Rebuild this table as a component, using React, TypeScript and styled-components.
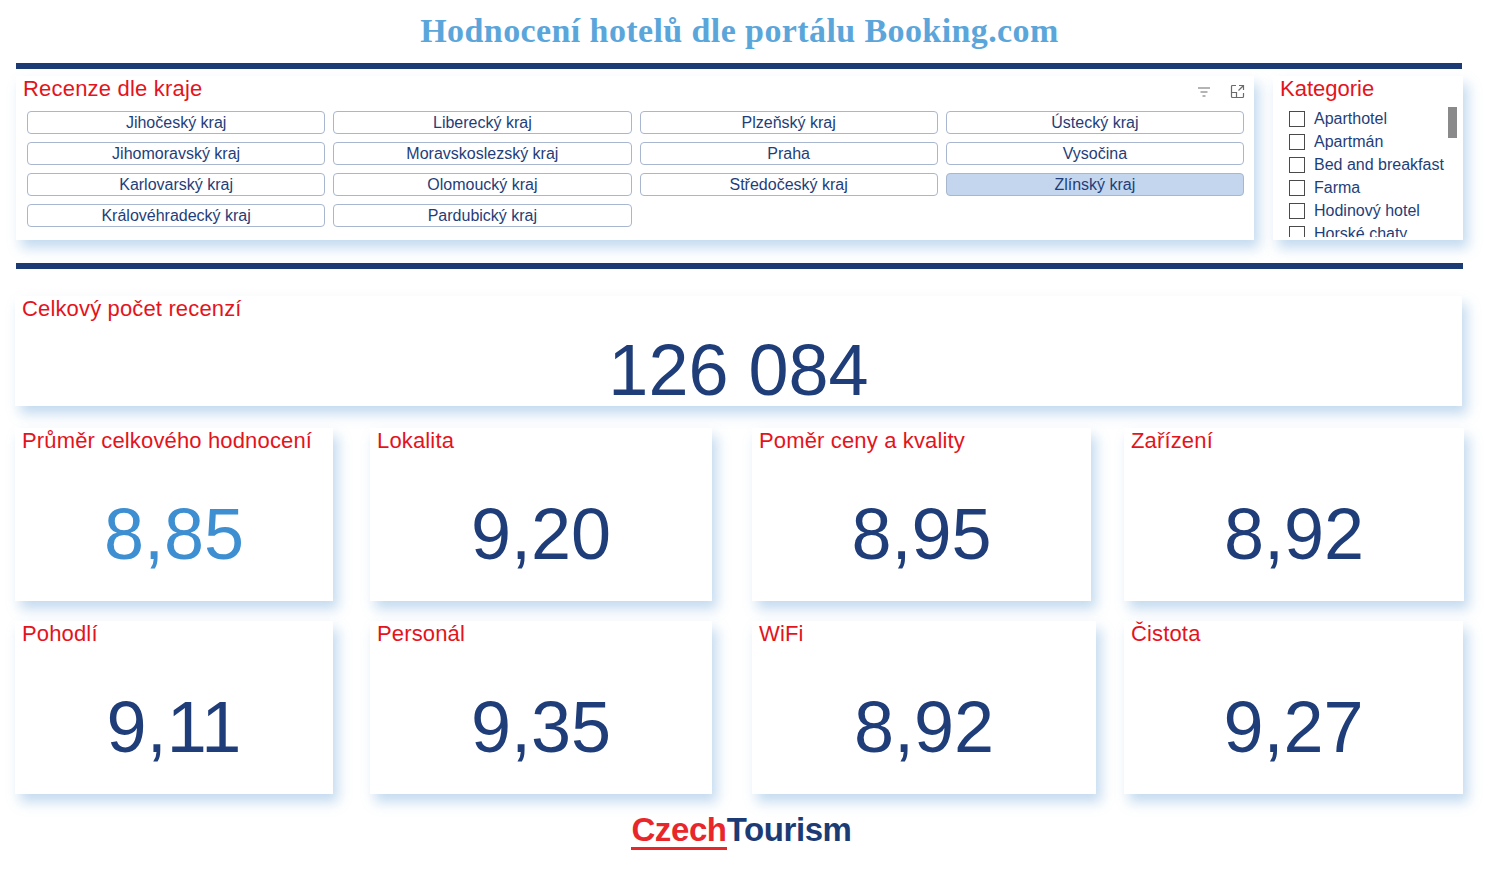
import styled, { createGlobalStyle } from 'styled-components'

const Color = {
	Navy: '#1c3b74',
	Number: '#1f3e79',
	NumberLight: '#3d8fd1',
	Red: '#e3141c',
	TitleBlue: '#5aa6db',
	ButtonBorder: '#a9b6cf',
	Selected: '#c3d6ee',
	Shadow: 'rgba(96, 158, 214, 0.38)'
}

const regions = [
	'Jihočeský kraj',
	'Liberecký kraj',
	'Plzeňský kraj',
	'Ústecký kraj',
	'Jihomoravský kraj',
	'Moravskoslezský kraj',
	'Praha',
	'Vysočina',
	'Karlovarský kraj',
	'Olomoucký kraj',
	'Středočeský kraj',
	'Zlínský kraj',
	'Královéhradecký kraj',
	'Pardubický kraj'
]

const categories = [
	'Aparthotel',
	'Apartmán',
	'Bed and breakfast',
	'Farma',
	'Hodinový hotel',
	'Horské chaty'
]

const scores = [
	{ label: 'Průměr celkového hodnocení', value: '8,85', width: 318, light: true },
	{ label: 'Lokalita', value: '9,20', width: 342 },
	{ label: 'Poměr ceny a kvality', value: '8,95', width: 339 },
	{ label: 'Zařízení', value: '8,92', width: 340 },
	{ label: 'Pohodlí', value: '9,11', width: 318 },
	{ label: 'Personál', value: '9,35', width: 342 },
	{ label: 'WiFi', value: '8,92', width: 344 },
	{ label: 'Čistota', value: '9,27', width: 339 }
]

const FilterIcon = () => (
	<svg width='14' height='12' viewBox='0 0 14 12' fill='none' stroke='#6b6b6b' strokeWidth='1.2'>
		<path d='M1 2h12M3.5 6h7M5.5 10h3' />
	</svg>
)

const FocusIcon = () => (
	<svg width='15' height='15' viewBox='0 0 15 15' fill='none' stroke='#6b6b6b' strokeWidth='1.2'>
		<path d='M6 1.5H2.5a1 1 0 0 0-1 1V12.5a1 1 0 0 0 1 1h10a1 1 0 0 0 1-1V9' />
		<path d='M1.5 8.5h5v5' />
		<path d='M9 1.5h4.5V6M13.5 1.5L8.5 6.5' />
	</svg>
)

export default function App() {
	return (
		<>
			<GlobalStyle />
			<Page>
				<Title>Hodnocení hotelů dle portálu Booking.com</Title>
				<Rule />
				<FilterRow>
					<SlicerPanel>
						<PanelHeader>
							<PanelTitle>Recenze dle kraje</PanelTitle>
							<HeaderIcons>
								<FilterIcon />
								<FocusIcon />
							</HeaderIcons>
						</PanelHeader>
						<ButtonGrid>
							{regions.map(r => (
								<RegionButton key={r} $selected={r === 'Zlínský kraj'}>
									{r}
								</RegionButton>
							))}
						</ButtonGrid>
					</SlicerPanel>
					<CategoryPanel>
						<CategoryTitle>Kategorie</CategoryTitle>
						<CategoryList>
							{categories.map(c => (
								<CategoryItem key={c}>
									<CheckBox />
									{c}
								</CategoryItem>
							))}
						</CategoryList>
						<ScrollThumb />
					</CategoryPanel>
				</FilterRow>
				<Rule $second />
				<TotalCard>
					<CardLabel>Celkový počet recenzí</CardLabel>
					<TotalValue>126 084</TotalValue>
				</TotalCard>
				<ScoreGrid>
					{scores.map(s => (
						<ScoreCard key={s.label} $width={s.width}>
							<CardLabel>{s.label}</CardLabel>
							<ScoreValue $light={s.light}>{s.value}</ScoreValue>
						</ScoreCard>
					))}
				</ScoreGrid>
				<Logo>
					<LogoCzech>Czech</LogoCzech>
					<LogoTourism>Tourism</LogoTourism>
				</Logo>
			</Page>
		</>
	)
}

const GlobalStyle = createGlobalStyle`
	html, body {
		margin: 0;
		padding: 0;
		background: #ffffff;
	}
	body {
		font-family: 'Liberation Sans', Arial, sans-serif;
	}
`

const Page = styled.div`
	width: 1447px;
	padding-left: 16px;
	display: flex;
	flex-direction: column;
`

const Title = styled.h1`
	margin: 0;
	height: 63px;
	display: flex;
	align-items: center;
	justify-content: center;
	font-family: 'Liberation Serif', 'Times New Roman', serif;
	font-weight: 700;
	font-size: 34px;
	letter-spacing: 0.4px;
	color: ${Color.TitleBlue};
	padding-bottom: 2px;
	box-sizing: border-box;
`

const Rule = styled.div<{ $second?: boolean }>`
	height: 6px;
	background: ${Color.Navy};
	margin-top: ${p => (p.$second ? '23px' : '0')};
	width: ${p => (p.$second ? '1447px' : '1446px')};
`

const FilterRow = styled.div`
	display: flex;
	gap: 19px;
	margin-top: 7px;
	height: 164px;
`

const Panel = styled.div`
	background: #ffffff;
	box-shadow: 5px 8px 12px ${Color.Shadow};
	box-sizing: border-box;
`

const SlicerPanel = styled(Panel)`
	width: 1238px;
	padding: 1px 10px 0 7px;
`

const PanelHeader = styled.div`
	display: flex;
	align-items: center;
	justify-content: space-between;
	height: 24px;
`

const PanelTitle = styled.div`
	font-size: 22px;
	color: ${Color.Red};
	letter-spacing: 0.2px;
`

const HeaderIcons = styled.div`
	display: flex;
	align-items: center;
	gap: 19px;
	padding-top: 5px;
	margin-right: -1px;
`

const ButtonGrid = styled.div`
	display: grid;
	grid-template-columns: repeat(4, 1fr);
	gap: 8px 8px;
	margin-top: 10px;
	padding-left: 4px;
`

const RegionButton = styled.div<{ $selected?: boolean }>`
	height: 23px;
	box-sizing: border-box;
	border: 1px solid ${Color.ButtonBorder};
	border-radius: 4px;
	background: ${p => (p.$selected ? Color.Selected : '#ffffff')};
	display: flex;
	align-items: center;
	justify-content: center;
	font-size: 16px;
	color: ${Color.Number};
`

const CategoryPanel = styled(Panel)`
	width: 190px;
	position: relative;
	padding: 1px 0 0 7px;
	overflow: hidden;
`

const CategoryTitle = styled.div`
	font-size: 22px;
	color: ${Color.Red};
	height: 24px;
	line-height: 24px;
`

const CategoryList = styled.div`
	margin-top: 6px;
	padding-left: 9px;
	display: flex;
	flex-direction: column;
	height: 130px;
	overflow: hidden;
`

const CategoryItem = styled.div`
	display: flex;
	align-items: center;
	gap: 9px;
	height: 23px;
	flex-shrink: 0;
	font-size: 16px;
	color: ${Color.Number};
	white-space: nowrap;
`

const CheckBox = styled.span`
	width: 16px;
	height: 16px;
	box-sizing: border-box;
	border: 1px solid #4a4a4a;
	flex-shrink: 0;
`

const ScrollThumb = styled.div`
	position: absolute;
	right: 6px;
	top: 31px;
	width: 9px;
	height: 31px;
	background: #8a8a8a;
`

const TotalCard = styled(Panel)`
	margin-top: 27px;
	margin-left: -1px;
	width: 1447px;
	height: 110px;
	padding: 0 7px;
	display: flex;
	flex-direction: column;
`

const CardLabel = styled.div`
	font-size: 22px;
	line-height: 26px;
	color: ${Color.Red};
	letter-spacing: 0.15px;
	white-space: nowrap;
`

const TotalValue = styled.div`
	flex: 1;
	display: flex;
	align-items: center;
	justify-content: center;
	padding-top: 12px;
	font-size: 72px;
	line-height: 1;
	color: ${Color.Number};
`

const ScoreGrid = styled.div`
	display: grid;
	grid-template-columns: 355px 382px 372px 338px;
	grid-auto-rows: 173px;
	row-gap: 20px;
	margin-top: 22px;
	margin-left: -1px;
	width: 1447px;
`

const ScoreCard = styled(Panel)<{ $width: number }>`
	width: ${p => p.$width}px;
	padding: 0 7px;
	display: flex;
	flex-direction: column;
`

const ScoreValue = styled.div<{ $light?: boolean }>`
	flex: 1;
	display: flex;
	align-items: center;
	justify-content: center;
	padding-top: 12px;
	font-size: 72px;
	line-height: 1;
	color: ${p => (p.$light ? Color.NumberLight : Color.Number)};
`

const Logo = styled.div`
	margin-top: 19px;
	display: flex;
	justify-content: center;
	align-items: flex-start;
	font-size: 33px;
	letter-spacing: -0.4px;
	font-weight: 700;
	line-height: 34px;
	height: 44px;
	padding-left: 4px;
`

const LogoCzech = styled.span`
	color: #e8272b;
	border-bottom: 3px solid #e8272b;
`

const LogoTourism = styled.span`
	color: ${Color.Navy};
`
